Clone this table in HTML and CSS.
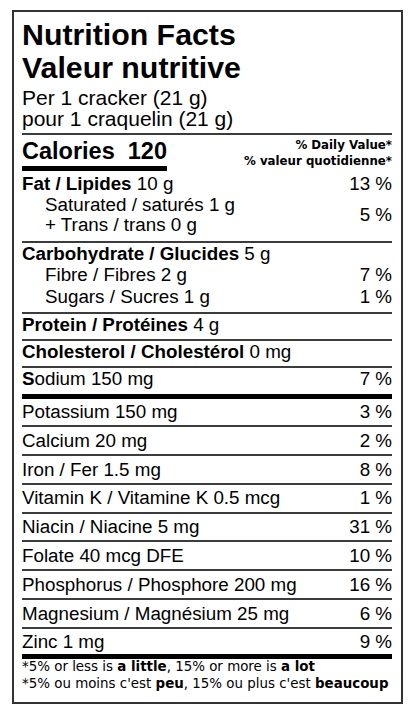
FILE: index.html
```html
<!DOCTYPE html>
<html lang="en">
<head>
    <meta charset="UTF-8">
    <meta name="viewport" content="width=device-width, initial-scale=1.0">
    <title>Nutrition Facts - Valeur nutritive</title>
    <link rel="stylesheet" href="styles.css">
</head>
<body>
    <div class="label">
        <h1 class="title">Nutrition Facts<br>Valeur nutritive</h1>
        <div class="serving">
            <div>Per 1 cracker (21 g)</div>
            <div>pour 1 craquelin (21 g)</div>
        </div>

        <div class="calories-row">
            <div class="calories">Calories&nbsp; 120</div>
            <div class="dv-head">
                <div>% Daily Value*</div>
                <div>% valeur quotidienne*</div>
            </div>
        </div>

        <!-- fat -->
        <div class="group fat">
            <div class="line top"><span><b>Fat / Lipides</b> 10 g</span><span>13 %</span></div>
            <div class="sub-pair">
                <div class="sub-lines">
                    <div>Saturated / saturés 1 g</div>
                    <div>+ Trans / trans 0 g</div>
                </div>
                <span>5 %</span>
            </div>
        </div>

        <!-- carbs -->
        <div class="group carbs">
            <div class="line top"><span><b>Carbohydrate / Glucides</b> 5 g</span></div>
            <div class="line sub"><span>Fibre / Fibres 2 g</span><span>7 %</span></div>
            <div class="line sub"><span>Sugars / Sucres 1 g</span><span>1 %</span></div>
        </div>

        <div class="row"><span><b>Protein / Protéines</b> 4 g</span></div>
        <div class="row"><span><b>Cholesterol / Cholestérol</b> 0 mg</span></div>
        <div class="row sodium"><span><b>S</b>odium 150 mg</span><span>7 %</span></div>

        <div class="minerals">
            <div class="mrow"><span>Potassium 150 mg</span><span>3 %</span></div>
            <div class="mrow"><span>Calcium 20 mg</span><span>2 %</span></div>
            <div class="mrow"><span>Iron / Fer 1.5 mg</span><span>8 %</span></div>
            <div class="mrow"><span>Vitamin K / Vitamine K 0.5 mcg</span><span>1 %</span></div>
            <div class="mrow"><span>Niacin / Niacine 5 mg</span><span>31 %</span></div>
            <div class="mrow"><span>Folate 40 mcg DFE</span><span>10 %</span></div>
            <div class="mrow"><span>Phosphorus / Phosphore 200 mg</span><span>16 %</span></div>
            <div class="mrow"><span>Magnesium / Magnésium 25 mg</span><span>6 %</span></div>
            <div class="mrow"><span>Zinc 1 mg</span><span>9 %</span></div>
        </div>

        <div class="footnote">
            <div>*5% or less is <b>a little</b>, 15% or more is <b>a lot</b></div>
            <div>*5% ou moins c'est <b>peu</b>, 15% ou plus c'est <b>beaucoup</b></div>
        </div>
    </div>
</body>
</html>
```

FILE: styles.css
```css
body {
    margin: 0;
    background: #fff;
    color: #000;
    font-family: "Liberation Sans", Arial, sans-serif;
}
.label {
    box-sizing: border-box;
    width: 391px;
    margin: 10px 0 0 12px;
    border: 2px solid #333;
    padding: 6px 9px 9px 8px;
    font-size: 18.8px;
}
.title {
    margin: 0;
    font-size: 30.3px;
    font-weight: bold;
    line-height: 33px;
}
.serving {
    margin-top: 2.5px;
    padding-bottom: 3px;
    font-size: 21px;
    line-height: 21.5px;
    border-bottom: 2px solid #3c3c3c;
}
.calories-row {
    display: flex;
    justify-content: space-between;
    align-items: flex-start;
}
.calories {
    margin-top: 3px;
    padding-bottom: 2px;
    font-size: 23.5px;
    font-weight: bold;
    line-height: 26px;
    border-bottom: 5px solid #000;
}
.dv-head {
    margin-top: 2px;
    font-family: "DejaVu Sans", Verdana, sans-serif;
    font-size: 11.8px;
    font-weight: bold;
    line-height: 16.5px;
    text-align: right;
}
.line, .row, .mrow, .sub-pair {
    display: flex;
    justify-content: space-between;
}
.group {
    border-bottom: 2px solid #3c3c3c;
}
.line.top {
    line-height: 21px;
}
.fat {
    padding-top: 2px;
    padding-bottom: 6px;
}
.sub-pair {
    align-items: center;
    margin-top: 1px;
    padding-left: 23px;
    line-height: 20px;
}
.carbs {
    padding-bottom: 4px;
}
.line.sub {
    padding-left: 23px;
    line-height: 22px;
}
.row {
    padding: 1px 0 4px;
    line-height: 20px;
    border-bottom: 2px solid #3c3c3c;
}
.row.sodium {
    padding-bottom: 5px;
    border-bottom: 5px solid #000;
}
.mrow {
    padding: 3.5px 0 3.3px;
    line-height: 20px;
    border-bottom: 2px solid #3c3c3c;
}
.mrow:last-child {
    padding-bottom: 2px;
    border-bottom: 5px solid #000;
}
.footnote {
    font-family: "DejaVu Sans", Verdana, sans-serif;
    font-size: 13.4px;
    line-height: 16.6px;
}
```
